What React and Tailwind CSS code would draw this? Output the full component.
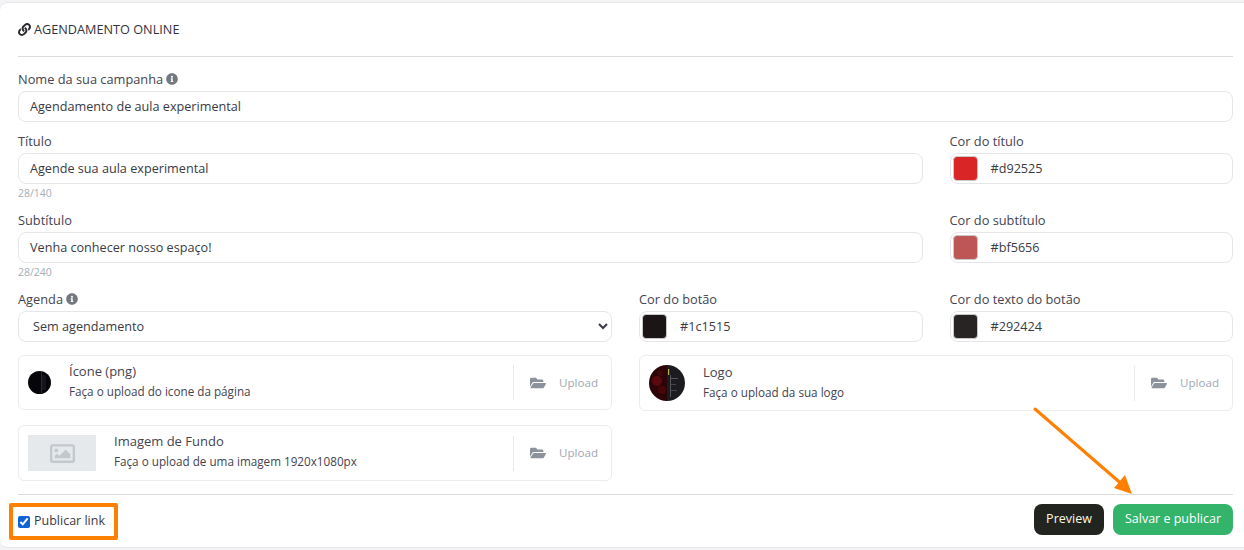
import React from "react";
import { FaLink, FaInfoCircle, FaFolderOpen, FaRegImage } from "react-icons/fa";

const inputCls = "block w-full h-[31px] rounded-[8px] border border-[#e6e6ea] bg-white px-[11px] text-[12.65px] text-[#3a3a44] outline-none";

function Label({ children, info }) {
  return (
    <div className="flex items-center gap-[3px] h-[14px] mb-[5px] text-[12.8px] leading-[14px] text-[#444450]">
      <span>{children}</span>
      {info && <FaInfoCircle className="text-[12px] text-[#73777e]" />}
    </div>
  );
}

function Counter({ children }) {
  return <div className="h-[17px] pt-[3px] text-[10.5px] leading-[13px] text-[#a3aeb8]">{children}</div>;
}

function ColorField({ label, color, code }) {
  return (
    <div>
      <Label>{label}</Label>
      <div className="flex items-center h-[31px] rounded-[8px] border border-[#e6e6ea] bg-white pl-[2px]">
        <span className="w-[25px] h-[25px] rounded-[4px] border border-[#c9c9c9]" style={{ backgroundColor: color }} />
        <span className="ml-[13px] text-[12.65px] text-[#3a3a44]">{code}</span>
      </div>
    </div>
  );
}

function UploadBtn() {
  return (
    <div className="ml-auto flex items-center self-stretch">
      <div className="w-px h-[35px] bg-[#e9e9ec]" />
      <FaFolderOpen className="ml-[16px] text-[16px] text-[#8b929c]" />
      <span className="ml-[13px] mr-[13px] text-[11.6px] text-[#a0a8b4]">Upload</span>
    </div>
  );
}

function UploadCard({ h, media, gap, title, desc }) {
  return (
    <div className={`flex items-center rounded-[6px] border border-[#ececef] bg-white pl-[9px] ${h}`}>
      {media}
      <div className={gap}>
        <div className="text-[13px] leading-[18px] text-[#444450]">{title}</div>
        <div className="mt-[3px] text-[11.7px] leading-[17px] text-[#444450]">{desc}</div>
      </div>
      <UploadBtn />
    </div>
  );
}

function IconImg() {
  return (
    <svg width="23" height="23" viewBox="0 0 23 23" className="shrink-0">
      <circle cx="11.5" cy="11.5" r="11.5" fill="#06060a" />
      <rect x="13" y="1" width="1" height="21" fill="#2e2e28" />
      <rect x="14" y="4" width="4" height="15" fill="#14141c" />
    </svg>
  );
}

function LogoImg() {
  return (
    <svg width="36" height="36" viewBox="0 0 36 36" className="shrink-0">
      <defs>
        <clipPath id="logoClip"><circle cx="18" cy="18" r="18" /></clipPath>
      </defs>
      <g clipPath="url(#logoClip)">
        <rect width="18" height="36" fill="#2c0508" />
        <rect x="18" width="18" height="36" fill="#1c1c20" />
        <circle cx="8" cy="16" r="5" fill="#5a0a0e" />
        <circle cx="13" cy="25" r="4" fill="#470709" />
        <circle cx="11" cy="8" r="3" fill="#3e070a" />
        <rect x="19" y="4" width="1.2" height="6" fill="#b5b060" />
        <rect x="21" y="10" width="1" height="22" fill="#55555a" />
        <rect x="22" y="13" width="7" height="1" fill="#55555a" />
        <rect x="22" y="19" width="5" height="1" fill="#44444a" />
        <rect x="22" y="25" width="6" height="1" fill="#44444a" />
      </g>
    </svg>
  );
}

export default function App() {
  return (
    <div className="relative w-[1244px] h-[550px] overflow-hidden bg-[#f3f3f5] pt-[2px] [font-family:'Open_Sans',sans-serif]">
      <div className="w-[1260px] h-[546px] rounded-l-[8px] bg-white pl-[18px] pr-[27px] border-y border-[#e8e8ea]">
        <div className="flex items-center gap-[3px] h-[54px] border-b border-[#dcdcdf] text-[12.7px] text-[#33333c]">
          <FaLink className="text-[13px] text-[#2a2a30]" />
          <span>AGENDAMENTO ONLINE</span>
        </div>

        <div className="pt-[15px]">
          <Label info>Nome da sua campanha</Label>
          <div className={inputCls + " leading-[29px]"}>Agendamento de aula experimental</div>
        </div>

        <div className="grid grid-cols-4 gap-x-[27px] pt-[12px]">
          <div className="col-span-3">
            <Label>Título</Label>
            <div className={inputCls + " leading-[29px]"}>Agende sua aula experimental</div>
            <Counter>28/140</Counter>
          </div>
          <ColorField label="Cor do título" color="#d92525" code="#d92525" />
        </div>

        <div className="grid grid-cols-4 gap-x-[27px] pt-[12px]">
          <div className="col-span-3">
            <Label>Subtítulo</Label>
            <div className={inputCls + " leading-[29px]"}>Venha conhecer nosso espaço!</div>
            <Counter>28/240</Counter>
          </div>
          <ColorField label="Cor do subtítulo" color="#bf5656" code="#bf5656" />
        </div>

        <div className="grid grid-cols-4 gap-x-[27px] pt-[12px]">
          <div className="col-span-2">
            <Label info>Agenda</Label>
            <select className={inputCls + " pl-[10px] pr-[1px] pb-[2px]"} defaultValue="Sem agendamento">
              <option>Sem agendamento</option>
            </select>
          </div>
          <ColorField label="Cor do botão" color="#1c1515" code="#1c1515" />
          <ColorField label="Cor do texto do botão" color="#292424" code="#292424" />
        </div>

        <div className="grid grid-cols-2 gap-x-[27px] pt-[13px]">
          <div className="flex flex-col gap-[15px]">
            <UploadCard h="h-[55px]" media={<IconImg />} gap="ml-[18px] -mt-[3px]" title="Ícone (png)" desc="Faça o upload do icone da página" />
            <UploadCard
              h="h-[56px]"
              media={
                <div className="flex items-center justify-center w-[68px] h-[36px] shrink-0 bg-[#e6e9ec]">
                  <FaRegImage className="text-[25px] text-[#c3c8cd]" />
                </div>
              }
              gap="ml-[18px] -mt-[5px]"
              title="Imagem de Fundo"
              desc="Faça o upload de uma imagem 1920x1080px"
            />
          </div>
          <div>
            <UploadCard h="h-[56px]" media={<LogoImg />} gap="ml-[18px] -mt-[2px]" title="Logo" desc="Faça o upload da sua logo" />
          </div>
        </div>

        <div className="flex items-center justify-between mt-[13px] h-[41px] border-t border-[#dcdcdf] pt-[9px]">
          <label className="flex items-center gap-[4px] pt-[4px] text-[12.5px] text-[#3a3a44]">
            <input type="checkbox" defaultChecked className="w-[12px] h-[12px] m-0 accent-[#0f62d6]" />
            <span>Publicar link</span>
          </label>
          <div className="flex gap-[9px]">
            <button className="h-[31px] w-[70px] rounded-[8px] bg-[#22251f] text-[12.5px] text-[#fff8e0]">Preview</button>
            <button className="h-[31px] w-[120px] rounded-[8px] bg-[#34b36b] text-[12.5px] text-white">Salvar e publicar</button>
          </div>
        </div>
      </div>

      <div className="absolute left-[9px] top-[503px] w-[109px] h-[37px] rounded-[2px] border-[4px] border-[#ff8000]" />
      <svg className="absolute left-0 top-0" width="1244" height="550" viewBox="0 0 1244 550">
        <line x1="1035" y1="409" x2="1124" y2="486" stroke="#ff8000" strokeWidth="3" strokeLinecap="round" />
        <polygon points="1132,494 1114,488 1125,475" fill="#ff8000" />
      </svg>
    </div>
  );
}
